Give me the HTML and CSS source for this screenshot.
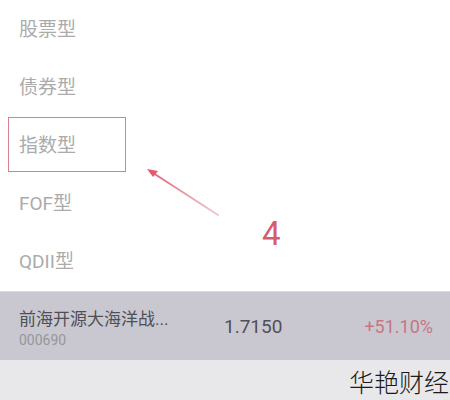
FILE: index.html
```
<!DOCTYPE html>
<html lang="zh">
<head>
<meta charset="utf-8">
<link rel="stylesheet" href="styles.css">
</head>
<body>
<div class="page">
  <ul class="menu">
    <li class="item">股票型</li>
    <li class="item">债券型</li>
    <li class="item">指数型</li>
    <li class="item">FOF型</li>
    <li class="item">QDII型</li>
  </ul>
  <div class="fund">
    <div class="fund-info">
      <div class="fund-name">前海开源大海洋战...</div>
      <div class="fund-code">000690</div>
    </div>
    <div class="fund-nav">1.7150</div>
    <div class="fund-rate">+51.10%</div>
  </div>
  <div class="footer">
    <span class="brand">华艳财经</span>
  </div>

  <div class="mark-box"></div>
  <svg class="mark-arrow" width="450" height="400" viewBox="0 0 450 400">
    <defs>
      <linearGradient id="g" x1="218" y1="215" x2="148" y2="170" gradientUnits="userSpaceOnUse">
        <stop offset="0" stop-color="#e8a0ac" stop-opacity="0.6"/>
        <stop offset="1" stop-color="#e05a6c"/>
      </linearGradient>
    </defs>
    <line x1="218" y1="215" x2="150" y2="171" stroke="url(#g)" stroke-width="2" stroke-linecap="round"/>
    <path d="M147 169 L158 171 L153 177 Z" fill="#e05a6c"/>
  </svg>
  <div class="mark-num">4</div>
</div>
</body>
</html>
```
FILE: styles.css
```
html, body {
  margin: 0;
  padding: 0;
  background: #ffffff;
}
.page {
  position: relative;
  width: 450px;
  height: 400px;
  overflow: hidden;
  font-family: Roboto, "Noto Sans CJK SC", sans-serif;
}
.menu {
  list-style: none;
  margin: 0;
  padding: 1px 0 0 0;
}
.item {
  box-sizing: border-box;
  height: 58px;
  display: flex;
  align-items: center;
  padding: 0 0 5px 19px;
  font-size: 19px;
  color: #ababab;
}
.fund {
  height: 68px;
  background: #c9c8d0;
  border-top: 1px solid #dcdce0;
  display: flex;
  align-items: center;
  padding: 0 17px 0 19px;
}
.fund-info {
  width: 205px;
  display: flex;
  flex-direction: column;
  gap: 2px;
  margin-top: 4px;
}
.fund-name {
  font-size: 17px;
  color: #4f4f55;
  line-height: 22px;
}
.fund-code {
  font-size: 14px;
  color: #96969c;
  line-height: 16px;
}
.fund-nav {
  font-size: 19px;
  color: #505058;
  flex: 1;
}
.fund-rate {
  font-size: 18px;
  color: #c87484;
}
.footer {
  height: 40px;
  background: #e8e8ea;
  display: flex;
  justify-content: flex-end;
  align-items: center;
}
.brand {
  font-family: "Noto Sans CJK SC", sans-serif;
  font-weight: 300;
  font-size: 25px;
  color: #1a1a1a;
  margin-right: 1px;
  line-height: 1;
  margin-top: 2px;
}
.mark-box {
  position: absolute;
  left: 8px;
  top: 117px;
  width: 116px;
  height: 53px;
  border: 1.5px solid #d88090;
}
.mark-arrow {
  position: absolute;
  left: 0;
  top: 0;
}
.mark-num {
  position: absolute;
  left: 262px;
  top: 214px;
  font-size: 33px;
  line-height: 40px;
  color: #d85a6c;
}
```
